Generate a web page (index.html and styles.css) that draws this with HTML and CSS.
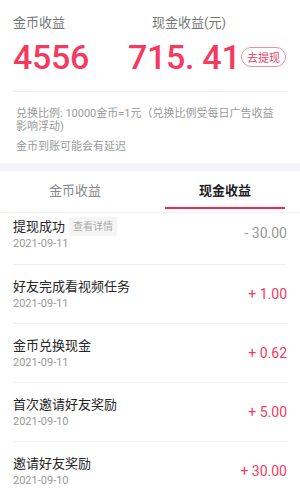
FILE: index.html
```html
<!DOCTYPE html>
<html lang="zh-CN">
<head>
<meta charset="utf-8">
<link rel="stylesheet" href="styles.css">
</head>
<body>
<div class="page">
  <section class="summary">
    <div class="labels">
      <div class="label label-coin">金币收益</div>
      <div class="label label-cash">现金收益(元)</div>
    </div>
    <div class="values">
      <div class="num num-coin">4556</div>
      <div class="num num-cash">715. 41</div>
      <button class="withdraw">去提现</button>
    </div>
  </section>
  <section class="notes">
    <p class="note">兑换比例: 10000金币=1元（兑换比例受每日广告收益影响浮动)</p>
    <p class="note note-gap">金币到账可能会有延迟</p>
  </section>
  <div class="band"></div>
  <nav class="tabs">
    <div class="tab">金币收益</div>
    <div class="tab tab-active">现金收益</div>
  </nav>
  <ul class="list">
    <li class="item item-first">
      <div class="info">
        <div class="title">提现成功<span class="tag">查看详情</span></div>
        <div class="date">2021-09-11</div>
      </div>
      <div class="amount minus">- 30.00</div>
    </li>
    <li class="item">
      <div class="info">
        <div class="title">好友完成看视频任务</div>
        <div class="date">2021-09-11</div>
      </div>
      <div class="amount plus">+ 1.00</div>
    </li>
    <li class="item">
      <div class="info">
        <div class="title">金币兑换现金</div>
        <div class="date">2021-09-11</div>
      </div>
      <div class="amount plus">+ 0.62</div>
    </li>
    <li class="item">
      <div class="info">
        <div class="title">首次邀请好友奖励</div>
        <div class="date">2021-09-10</div>
      </div>
      <div class="amount plus">+ 5.00</div>
    </li>
    <li class="item">
      <div class="info">
        <div class="title">邀请好友奖励</div>
        <div class="date">2021-09-10</div>
      </div>
      <div class="amount plus">+ 30.00</div>
    </li>
  </ul>
</div>
</body>
</html>
```

FILE: styles.css
```css
* { box-sizing: border-box; }
html, body {
  margin: 0;
  padding: 0;
  background: #fff;
}
body {
  font-family: "Roboto", "Noto Sans CJK SC", sans-serif;
  width: 300px;
  height: 488px;
  overflow: hidden;
}
.page {
  width: 300px;
}
.summary {
  margin: 0 13px;
  padding-top: 14px;
  height: 92px;
  border-bottom: 1px solid #eeeeee;
}
.labels {
  display: flex;
  height: 18px;
  line-height: 18px;
}
.label {
  font-size: 13px;
  color: #777;
}
.label-coin { width: 139px; }
.values {
  display: flex;
  align-items: center;
  margin-top: 6px;
  height: 38px;
}
.num {
  font-size: 34px;
  font-weight: 500;
  color: #f43a5f;
  line-height: 38px;
  letter-spacing: -0.3px;
}
.num-coin { width: 115px; }
.num-cash { width: 113px; }
.withdraw {
  margin: 0;
  padding: 0;
  width: 45px;
  height: 20px;
  border: 1px solid #ee8fa3;
  border-radius: 10px;
  background: #fff;
  color: #e23c60;
  font-family: "Noto Sans CJK SC", sans-serif;
  font-size: 11px;
  line-height: 18px;
  text-align: center;
}
.notes {
  padding: 16px 22px 9px 16px;
}
.note {
  margin: 0;
  font-size: 11px;
  line-height: 12.5px;
  color: #9a9a9a;
}
.note-gap { margin-top: 8px; }
.band {
  height: 8px;
  background: #f4f4f8;
}
.tabs {
  display: flex;
  height: 42px;
  border-bottom: 1px solid #f3f3f3;
}
.tab {
  flex: 1;
  text-align: center;
  font-size: 13px;
  line-height: 40px;
  color: #888;
  position: relative;
}
.tab-active {
  color: #1f1f1f;
  font-weight: 700;
}
.tab-active::after {
  content: "";
  position: absolute;
  left: 15px;
  right: 15px;
  top: 36px;
  height: 2px;
  background: #f2294f;
}
.list {
  list-style: none;
  margin: 0;
  padding: 0 13px;
}
.item {
  display: flex;
  align-items: center;
  justify-content: space-between;
  padding: 12px 0 11px;
  border-bottom: 1px solid #f0f0f0;
}
.item-first {
  padding-top: 4px;
  padding-bottom: 12px;
}
.title {
  font-size: 13px;
  line-height: 19px;
  color: #262626;
  display: flex;
  align-items: center;
}
.tag {
  margin-left: 4px;
  padding: 0 4px;
  height: 19px;
  line-height: 19px;
  font-size: 10px;
  color: #a8a8a8;
  background: #f5f5f5;
  border-radius: 2px;
}
.date {
  font-size: 11px;
  line-height: 16px;
  color: #9a9a9a;
}
.amount {
  font-size: 14px;
  line-height: 18px;
}
.item-first .amount { margin-top: -2px; }
.minus { color: #999; }
.plus { color: #f43a5f; }
```
